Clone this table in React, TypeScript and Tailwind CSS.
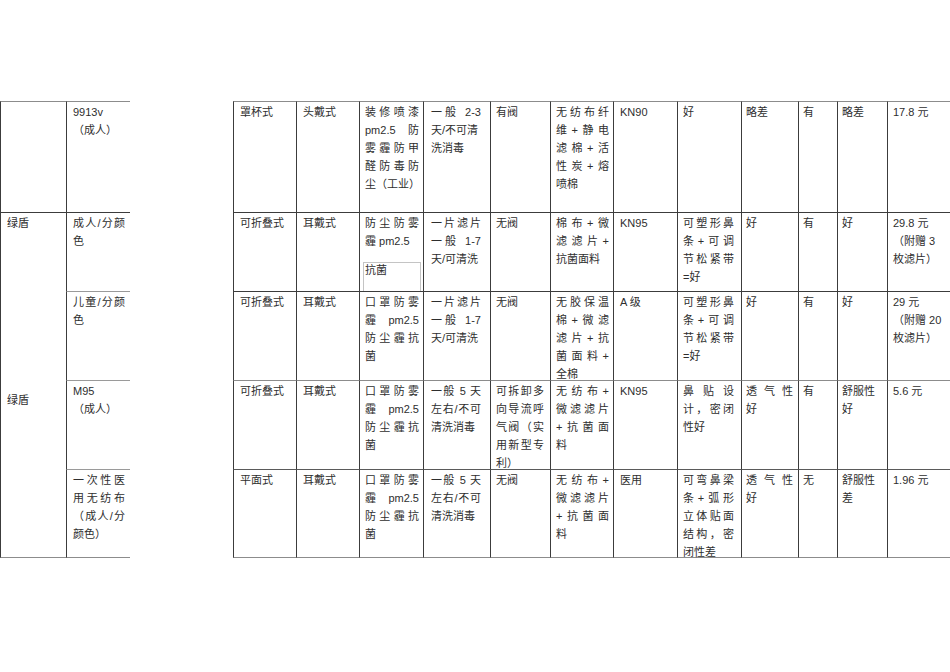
import React from 'react';

// A line that starts with "~" is justified across the cell width
type Cell = string[];

type Col = { cell: string; inner: string };

const cols: Col[] = [
  { cell: 'w-[63px] pl-[6px]', inner: 'w-[52px]' },
  { cell: 'w-[63px] pl-[6px]', inner: 'w-[52px]' },
  { cell: 'w-[64px] pl-[5px]', inner: 'w-[54px]' },
  { cell: 'w-[67px] pl-[7px]', inner: 'w-[50px]' },
  { cell: 'w-[60px] pl-[5px]', inner: 'w-[48px]' },
  { cell: 'w-[63px] pl-[5px]', inner: 'w-[53px]' },
  { cell: 'w-[64px] pl-[6px]', inner: 'w-[52px]' },
  { cell: 'w-[64px] pl-[5px]', inner: 'w-[51px]' },
  { cell: 'w-[57px] pl-[4px]', inner: 'w-[47px]' },
  { cell: 'w-[39px] pl-[4px]', inner: 'w-[32px]' },
  { cell: 'w-[50px] pl-[4px]', inner: 'w-[44px]' },
  { cell: 'w-[80px] pl-[5px]', inner: 'w-[64px]' },
];

type Row = { h: string; top: string; last?: boolean; cells: Cell[] };

const rows: Row[] = [
  {
    h: 'h-[111px]',
    top: 'border-t-[#8c8c8c]',
    cells: [
      ['罩杯式'],
      ['头戴式'],
      ['~装修喷漆', '~pm2.5 防', '~雾霾防甲', '~醛防毒防', '~尘（工业）'],
      ['~一般 2-3', '天/不可清', '洗消毒'],
      ['有阀'],
      ['~无纺布纤', '~维+静电', '~滤棉+活', '~性炭+熔', '喷棉'],
      ['KN90'],
      ['好'],
      ['略差'],
      ['有'],
      ['略差'],
      ['17.8 元'],
    ],
  },
  {
    h: 'h-[79px]',
    top: 'border-t-[#3c3c3c]',
    cells: [
      ['可折叠式'],
      ['耳戴式'],
      ['~防尘防雾', '霾 pm2.5'],
      ['~一片滤片', '~一般 1-7', '天/可清洗'],
      ['无阀'],
      ['~棉布+微', '~滤滤片+', '抗菌面料'],
      ['KN95'],
      ['~可塑形鼻', '~条+可调', '~节松紧带', '=好'],
      ['好'],
      ['有'],
      ['好'],
      ['29.8 元', '（附赠 3', '枚滤片）'],
    ],
  },
  {
    h: 'h-[89px]',
    top: 'border-t-[#3c3c3c]',
    cells: [
      ['可折叠式'],
      ['耳戴式'],
      ['~口罩防雾', '~霾 pm2.5', '~防尘霾抗', '菌'],
      ['~一片滤片', '~一般 1-7', '天/可清洗'],
      ['无阀'],
      ['~无胶保温', '~棉+微滤', '~滤片+抗', '~菌面料+', '全棉'],
      ['A 级'],
      ['~可塑形鼻', '~条+可调', '~节松紧带', '=好'],
      ['好'],
      ['有'],
      ['好'],
      ['29 元', '（附赠 20', '枚滤片）'],
    ],
  },
  {
    h: 'h-[89px]',
    top: 'border-t-[#8c8c8c]',
    cells: [
      ['可折叠式'],
      ['耳戴式'],
      ['~口罩防雾', '~霾 pm2.5', '~防尘霾抗', '菌'],
      ['~一般 5 天', '~左右/不可', '清洗消毒'],
      ['~可拆卸多', '~向导流呼', '~气阀（实', '~用新型专', '利）'],
      ['~无纺布+', '~微滤滤片', '~+抗菌面', '料'],
      ['KN95'],
      ['~鼻贴设', '~计，密闭', '性好'],
      ['~透气性', '好'],
      ['有'],
      ['舒服性', '好'],
      ['5.6 元'],
    ],
  },
  {
    h: 'h-[89px]',
    top: 'border-t-[#5a5a5a]',
    last: true,
    cells: [
      ['平面式'],
      ['耳戴式'],
      ['~口罩防雾', '~霾 pm2.5', '~防尘霾抗', '菌'],
      ['~一般 5 天', '~左右/不可', '清洗消毒'],
      ['无阀'],
      ['~无纺布+', '~微滤滤片', '~+抗菌面', '料'],
      ['医用'],
      ['~可弯鼻梁', '~条+弧形', '~立体贴面', '~结构，密', '闭性差'],
      ['~透气性', '好'],
      ['无'],
      ['舒服性', '差'],
      ['1.96 元'],
    ],
  },
];

function Lines({ lines }: { lines: string[] }) {
  return (
    <>
      {lines.map((l, i) =>
        l.startsWith('~') ? (
          <div key={i} className="whitespace-nowrap text-justify [text-align-last:justify]">
            {l.slice(1)}
          </div>
        ) : (
          <div key={i} className="whitespace-nowrap">
            {l}
          </div>
        )
      )}
    </>
  );
}

function LeftTable() {
  return (
    <div className="grid w-[130px] shrink-0 grid-cols-[66px_64px] grid-rows-[111px_79px_89px_89px_89px]">
      <div className="border-l border-t border-l-[#3c3c3c] border-t-[#8c8c8c]" />
      <div className="border-l border-t border-l-[#3c3c3c] border-t-[#8c8c8c] pl-[6px] pt-[1px]">
        <div className="w-[52px]">
          <Lines lines={['9913v', '（成人）']} />
        </div>
      </div>

      <div className="row-span-4 border-b border-l border-t border-b-[#8c8c8c] border-l-[#3c3c3c] border-t-[#3c3c3c] pl-[6px] pt-[1px]">
        <div>绿盾</div>
        <div className="mt-[159px]">绿盾</div>
      </div>
      <div className="border-l border-t border-l-[#3c3c3c] border-t-[#3c3c3c] pl-[6px] pt-[1px]">
        <div className="w-[52px]">
          <Lines lines={['~成人/分颜', '色']} />
        </div>
      </div>
      <div className="border-l border-t border-l-[#3c3c3c] border-t-[#9a9a9a] pl-[6px] pt-[1px]">
        <div className="w-[52px]">
          <Lines lines={['~儿童/分颜', '色']} />
        </div>
      </div>
      <div className="border-l border-t border-l-[#3c3c3c] border-t-[#9a9a9a] pl-[6px] pt-[1px]">
        <div className="w-[52px]">
          <Lines lines={['M95', '（成人）']} />
        </div>
      </div>
      <div className="border-b border-l border-t border-b-[#8c8c8c] border-l-[#3c3c3c] border-t-[#9a9a9a] pl-[6px] pt-[1px]">
        <div className="w-[52px]">
          <Lines lines={['~一次性医', '~用无纺布', '~（成人/分', '颜色）']} />
        </div>
      </div>
    </div>
  );
}

function RightTable() {
  return (
    <div className="ml-[103px] flex shrink-0 flex-col">
      {rows.map((row, ri) => (
        <div key={ri} className={`flex ${row.h}`}>
          {row.cells.map((cell, ci) => (
            <div
              key={ci}
              className={`${cols[ci].cell} shrink-0 overflow-visible border-l border-t border-l-[#3c3c3c] ${row.top} ${
                row.last ? 'border-b border-b-[#8c8c8c]' : ''
              } pt-[1px]`}
            >
              <div className={cols[ci].inner}>
                <Lines lines={cell} />
                {ri === 1 && ci === 2 && (
                  <div className="-ml-[2px] mt-[12px] h-[29px] w-[58px] border-l border-r border-t border-[#c4c4c4] pl-[1px] leading-[15px]">
                    抗菌
                  </div>
                )}
              </div>
            </div>
          ))}
        </div>
      ))}
    </div>
  );
}

export default function App() {
  return (
    <div className="h-[672px] w-[950px] overflow-hidden bg-white pt-[101px] font-['Liberation_Sans','Noto_Sans_CJK_SC',sans-serif] text-[11px] leading-[18px] text-[#2e2e2e]">
      <div className="flex">
        <LeftTable />
        <RightTable />
      </div>
    </div>
  );
}
